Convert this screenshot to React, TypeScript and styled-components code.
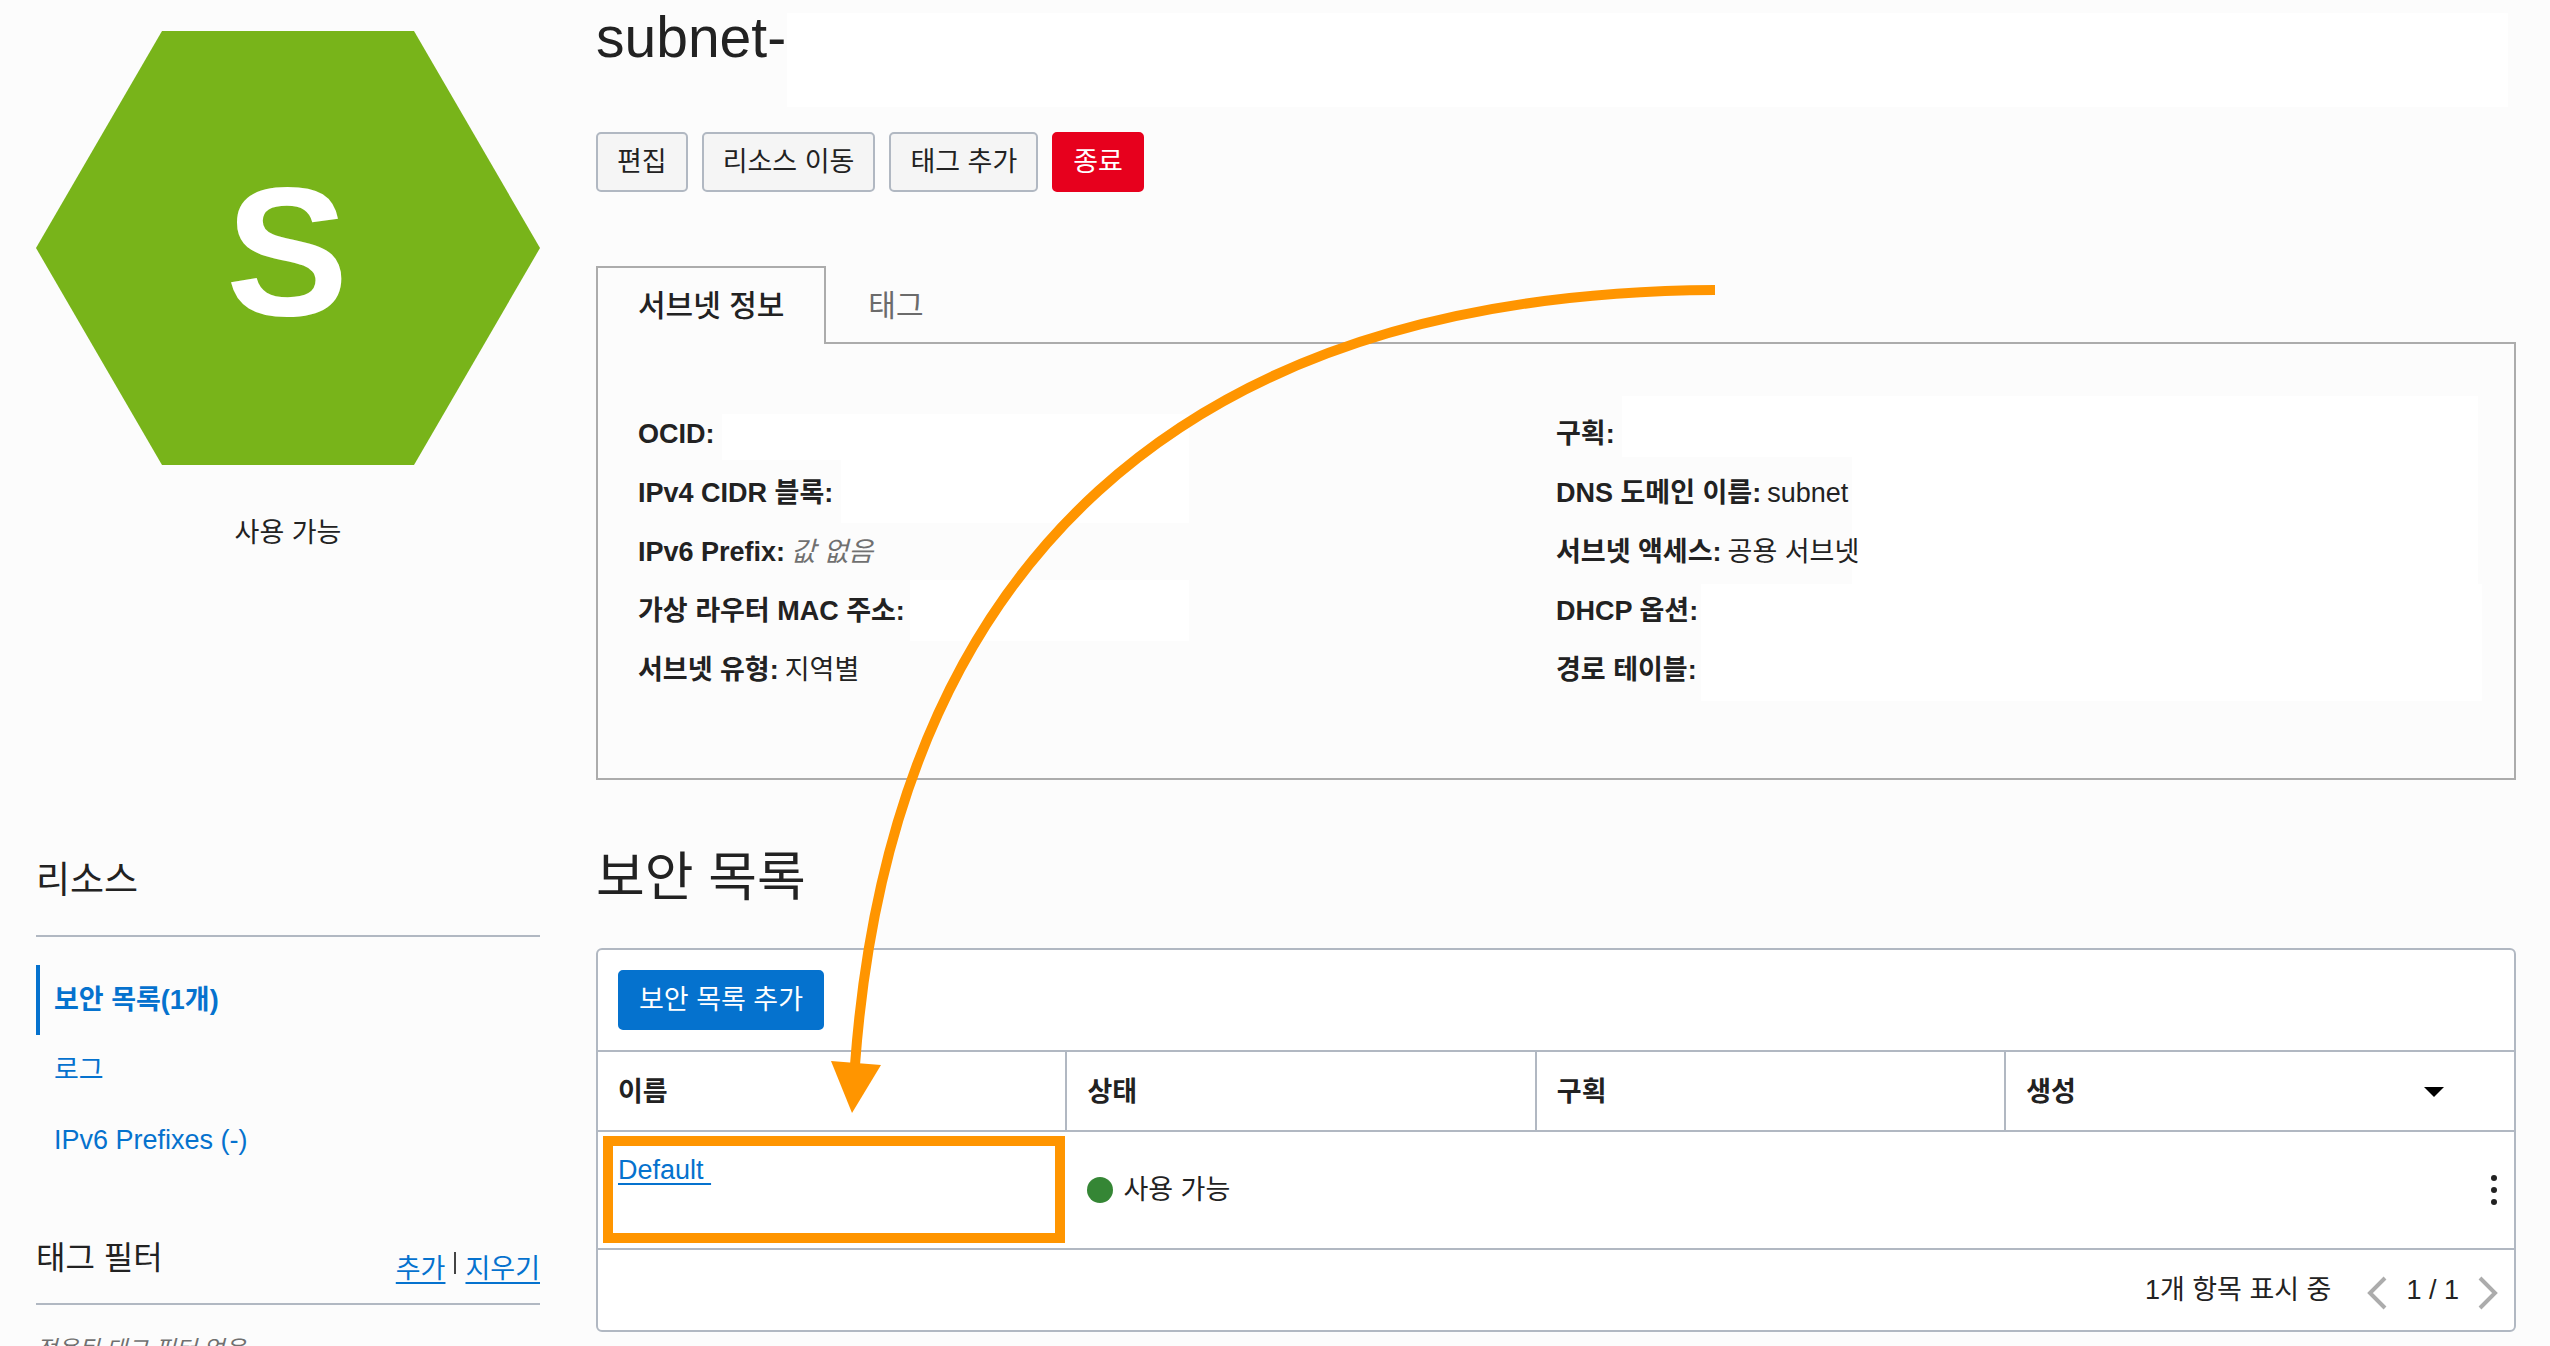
import React from "react";
import styled, { createGlobalStyle, css } from "styled-components";

const GlobalStyle = createGlobalStyle`
  *, *::before, *::after { box-sizing: border-box; }
  body {
    margin: 0;
    background: #fcfcfc;
    color: #222;
    font-family: "Liberation Sans", "Noto Sans CJK KR", sans-serif;
    font-size: 27px;
    line-height: 40px;
  }
  button { font: inherit; cursor: pointer; }
  h1, h2, h3, p, ul, dl, dd { margin: 0; padding: 0; }
`;

const Page = styled.div`
  display: flex;
  align-items: flex-start;
  gap: 56px;
  height: 100vh;
  padding: 0 34px 0 36px;
  overflow: hidden;
`;

/* Sidebar */

const Sidebar = styled.aside`
  flex: 0 0 504px;
  padding-top: 31px;
`;

const Badge = styled.svg`
  display: block;
  width: 100%;
  height: auto;
`;

const BadgeStatus = styled.p`
  margin-top: 48px;
  text-align: center;
`;

const SideHead = styled.div<{ $top: number; $bottom: number }>`
  display: flex;
  justify-content: space-between;
  align-items: flex-end;
  margin-top: ${(p) => p.$top}px;
  padding-bottom: ${(p) => p.$bottom}px;
  border-bottom: 2px solid #b1b8c2;
`;

const SideTitle = styled.h2<{ $size: number }>`
  font-size: ${(p) => p.$size}px;
  line-height: 62px;
  font-weight: 400;
`;

const NavList = styled.ul`
  margin-top: 28px;
  list-style: none;
`;

const NavLink = styled.a<{ $active?: boolean }>`
  display: block;
  padding-left: 14px;
  border-left: 4px solid ${(p) => (p.$active ? "#0572ce" : "transparent")};
  color: #0572ce;
  line-height: 70px;
  font-weight: ${(p) => (p.$active ? 700 : 400)};
  text-decoration: none;
`;

const FilterActions = styled.div`
  display: flex;
  align-items: center;
  gap: 9px;
`;

const Divider = styled.span`
  width: 2px;
  height: 22px;
  margin-bottom: 12px;
  background: #444;
`;

const TextLink = styled.a`
  color: #0572ce;
  text-decoration: underline;
  text-decoration-thickness: 2px;
  text-underline-offset: 4px;
`;

const EmptyNote = styled.p`
  margin-top: 24px;
  color: #707070;
  font-size: 23px;
  font-style: italic;
`;

/* Main column */

const Main = styled.main`
  position: relative;
  flex: 1;
  min-width: 0;
  padding-top: 5px;
`;

const Title = styled.h1`
  font-size: 57px;
  line-height: 64px;
  font-weight: 400;
`;

const Mask = styled.span<{ $top: number; $height: number; $left: number; $right?: number; $width?: number }>`
  position: absolute;
  top: ${(p) => p.$top}px;
  left: ${(p) => p.$left}px;
  height: ${(p) => p.$height}px;
  ${(p) => (p.$width ? `width: ${p.$width}px;` : `right: ${p.$right}px;`)}
  background: #fff;
`;

const Actions = styled.div`
  display: flex;
  gap: 14px;
  margin-top: 63px;
`;

const tones = {
  plain: css`background: #f5f5f5; border-color: #b1b8c2; color: #222;`,
  danger: css`background: #e7001d; border-color: #e7001d; color: #fff;`,
  primary: css`background: #0572ce; border-color: #0572ce; color: #fff;`,
};

const Button = styled.button<{ $tone?: keyof typeof tones }>`
  height: 60px;
  padding: 0 19px;
  border: 2px solid;
  border-radius: 5px;
  ${(p) => tones[p.$tone ?? "plain"]}
`;

const TabList = styled.div`
  display: flex;
  margin-top: 74px;
`;

const Tab = styled.button<{ $active?: boolean }>`
  position: relative;
  height: 78px;
  padding: 0 40px;
  border: 2px solid transparent;
  border-bottom: 0;
  background: transparent;
  color: #6b6b6b;
  font-size: 30px;
  ${(p) =>
    p.$active &&
    css`
      z-index: 1;
      border-color: #acacac;
      background: #fcfcfc;
      color: #222;
      font-weight: 500;
    `}
`;

const InfoPanel = styled.section`
  position: relative;
  display: grid;
  grid-template-columns: 1fr 1fr;
  margin-top: -2px;
  padding: 61px 40px 78px;
  border: 2px solid #acacac;
`;

const InfoList = styled.dl`
  position: relative;
  z-index: 1;
`;

const InfoRow = styled.div`
  display: flex;
  gap: 6px;
  line-height: 59px;

  dt { font-weight: 700; }
`;

const InfoValue = styled.dd<{ $muted?: boolean }>`
  ${(p) => p.$muted && css`color: #707070; font-style: italic;`}
`;

const SectionTitle = styled.h2`
  margin: 66px 0 38px;
  font-size: 53px;
  line-height: 64px;
  font-weight: 400;
`;

const Card = styled.section`
  border: 2px solid #b1b8c2;
  border-radius: 6px;
  background: #fff;
`;

const Toolbar = styled.div`
  padding: 20px;
`;

const Table = styled.table`
  width: 100%;
  table-layout: fixed;
  border-spacing: 0;
`;

const Th = styled.th<{ $width?: string; $divided?: boolean }>`
  width: ${(p) => p.$width ?? "auto"};
  height: 82px;
  padding: 2px 20px 0;
  border: 0 solid #b1b8c2;
  border-width: 2px ${(p) => (p.$divided ? 2 : 0)}px 2px 0;
  text-align: left;
  font-weight: 700;
`;

const ActionTh = styled(Th)`
  padding: 0;
`;

const SortLabel = styled.div`
  display: flex;
  justify-content: space-between;
  align-items: center;
  padding-right: 10px;
`;

const Td = styled.td`
  position: relative;
  height: 118px;
  padding: 0 20px;
  border-bottom: 2px solid #b1b8c2;
  text-align: left;
`;

const NameCell = styled(Td)`
  padding-top: 18px;
  vertical-align: top;
`;

const ActionTd = styled(Td)`
  padding: 0;
`;

const Highlight = styled.span`
  position: absolute;
  inset: 4px 2px 5px 5px;
  border: 10px solid #ff9500;
  pointer-events: none;
`;

const Status = styled.span`
  display: flex;
  align-items: center;
  gap: 10px;

  &::before {
    content: "";
    width: 26px;
    height: 26px;
    border-radius: 50%;
    background: #358635;
  }
`;

const IconButton = styled.button`
  display: flex;
  margin: 0 auto;
  padding: 0;
  border: 0;
  background: none;
`;

const CardFooter = styled.div`
  display: flex;
  justify-content: flex-end;
  align-items: center;
  height: 80px;
  padding-right: 16px;
`;

const Pager = styled.nav`
  display: flex;
  align-items: center;
  gap: 19px;
  margin-left: 36px;

  button { padding-top: 5px; }
`;

const Arrow = styled.svg`
  position: absolute;
  z-index: 2;
  top: 280px;
  left: 230px;
  width: 900px;
  height: 840px;
  pointer-events: none;
`;

const stop = (e: React.MouseEvent) => e.preventDefault();

type Info = { label: string; value?: string; muted?: boolean };

const leftInfo: Info[] = [
  { label: "OCID:" },
  { label: "IPv4 CIDR 블록:" },
  { label: "IPv6 Prefix:", value: "값 없음", muted: true },
  { label: "가상 라우터 MAC 주소:" },
  { label: "서브넷 유형:", value: "지역별" },
];

const rightInfo: Info[] = [
  { label: "구획:" },
  { label: "DNS 도메인 이름:", value: "subnet" },
  { label: "서브넷 액세스:", value: "공용 서브넷" },
  { label: "DHCP 옵션:" },
  { label: "경로 테이블:" },
];

const InfoColumn = ({ items }: { items: Info[] }) => (
  <InfoList>
    {items.map((item) => (
      <InfoRow key={item.label}>
        <dt>{item.label}</dt>
        <InfoValue $muted={item.muted}>{item.value}</InfoValue>
      </InfoRow>
    ))}
  </InfoList>
);

const Chevron = ({ points }: { points: string }) => (
  <svg width="20" height="34" viewBox="0 0 20 34" fill="none" stroke="#acacac" strokeWidth="4">
    <polyline points={points} />
  </svg>
);

export default function App() {
  return (
    <>
      <GlobalStyle />
      <Page>
        <Sidebar>
          <Badge viewBox="0 0 504 434">
            <polygon points="126,0 378,0 504,217 378,434 126,434 0,217" fill="#78b41a" />
            <text x="251" y="284" textAnchor="middle" fontSize="184" fontWeight="700" fill="#fff">
              S
            </text>
          </Badge>
          <BadgeStatus>사용 가능</BadgeStatus>

          <SideHead $top={297} $bottom={23}>
            <SideTitle $size={37}>리소스</SideTitle>
          </SideHead>
          <NavList>
            <li><NavLink href="#security" $active onClick={stop}>보안 목록(1개)</NavLink></li>
            <li><NavLink href="#logs" onClick={stop}>로그</NavLink></li>
            <li><NavLink href="#ipv6" onClick={stop}>IPv6 Prefixes (-)</NavLink></li>
          </NavList>

          <SideHead $top={52} $bottom={14}>
            <SideTitle $size={32}>태그 필터</SideTitle>
            <FilterActions>
              <TextLink href="#add" onClick={stop}>추가</TextLink>
              <Divider />
              <TextLink href="#clear" onClick={stop}>지우기</TextLink>
            </FilterActions>
          </SideHead>
          <EmptyNote>적용된 태그 필터 없음</EmptyNote>
        </Sidebar>

        <Main>
          <Title>subnet-</Title>
          <Mask $top={13} $height={94} $left={191} $right={8} />
          <Actions>
            <Button type="button">편집</Button>
            <Button type="button">리소스 이동</Button>
            <Button type="button">태그 추가</Button>
            <Button type="button" $tone="danger">종료</Button>
          </Actions>

          <TabList role="tablist">
            <Tab type="button" role="tab" aria-selected="true" $active>서브넷 정보</Tab>
            <Tab type="button" role="tab" aria-selected="false">태그</Tab>
          </TabList>
          <InfoPanel role="tabpanel">
            <Mask $top={70} $height={46} $left={124} $width={467} />
            <Mask $top={116} $height={63} $left={243} $width={348} />
            <Mask $top={236} $height={61} $left={312} $width={279} />
            <Mask $top={52} $height={61} $left={1024} $right={36} />
            <Mask $top={113} $height={127} $left={1254} $right={36} />
            <Mask $top={240} $height={117} $left={1103} $right={32} />
            <InfoColumn items={leftInfo} />
            <InfoColumn items={rightInfo} />
          </InfoPanel>

          <SectionTitle>보안 목록</SectionTitle>
          <Card>
            <Toolbar>
              <Button type="button" $tone="primary">보안 목록 추가</Button>
            </Toolbar>
            <Table>
              <thead>
                <tr>
                  <Th $width="24.5%" $divided>이름</Th>
                  <Th $width="24.5%" $divided>상태</Th>
                  <Th $width="24.5%" $divided>구획</Th>
                  <Th>
                    <SortLabel>
                      생성
                      <svg width="20" height="10" viewBox="0 0 20 10" aria-hidden="true">
                        <polygon points="0,0 20,0 10,10" fill="#000" />
                      </svg>
                    </SortLabel>
                  </Th>
                  <ActionTh $width="40px" />
                </tr>
              </thead>
              <tbody>
                <tr>
                  <NameCell>
                    <TextLink href="#default" onClick={stop}>Default&nbsp;</TextLink>
                    <Highlight />
                  </NameCell>
                  <Td><Status>사용 가능</Status></Td>
                  <Td />
                  <Td />
                  <ActionTd>
                    <IconButton type="button" aria-label="작업">
                      <svg width="8" height="30" viewBox="0 0 8 30" fill="#222">
                        <circle cx="4" cy="3" r="3" />
                        <circle cx="4" cy="15" r="3" />
                        <circle cx="4" cy="27" r="3" />
                      </svg>
                    </IconButton>
                  </ActionTd>
                </tr>
              </tbody>
            </Table>
            <CardFooter>
              <span>1개 항목 표시 중</span>
              <Pager>
                <IconButton type="button" aria-label="이전">
                  <Chevron points="18,2 3,17 18,32" />
                </IconButton>
                <span>1 / 1</span>
                <IconButton type="button" aria-label="다음">
                  <Chevron points="2,2 17,17 2,32" />
                </IconButton>
              </Pager>
            </CardFooter>
          </Card>

          <Arrow viewBox="826 280 900 840" aria-hidden="true">
            <path d="M1715 290C1181 293 892 564 855 1065" fill="none" stroke="#ff9500" strokeWidth="10" />
            <polygon points="831,1061 881,1065 852,1113" fill="#ff9500" />
          </Arrow>
        </Main>
      </Page>
    </>
  );
}
